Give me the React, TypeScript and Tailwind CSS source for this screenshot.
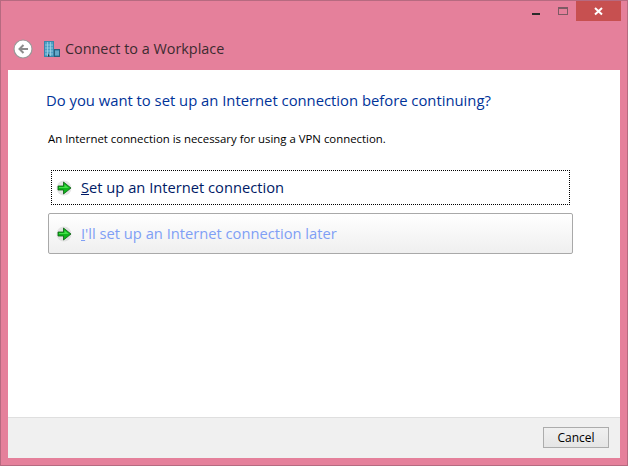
import React from 'react';

const font = "font-['Open_Sans','Noto_Sans',sans-serif]";

function ArrowIcon() {
    return (
        <svg width="18" height="18" viewBox="0 0 18 18" className="shrink-0 -ml-[1px]">
            <circle cx="8" cy="9" r="7.5" fill="#cfcfcf" opacity="0.55" />
            <path d="M2 7h5.5V3L15 9l-7.5 6v-4H2z" fill="#0fb51d" stroke="#0a5f10" strokeWidth="0.8" />
            <path d="M3 8h5.5V5.5L13 9H3z" fill="#45e04a" />
        </svg>
    );
}

function BackIcon() {
    return (
        <svg width="20" height="20" viewBox="0 0 20 20">
            <circle cx="10" cy="10" r="9" fill="#fff" stroke="#9a9a9a" strokeWidth="1.2" />
            <path d="M15 10H7M10.5 6 6.5 10l4 4" fill="none" stroke="#8c8c8c" strokeWidth="2" />
        </svg>
    );
}

function WorkplaceIcon() {
    return (
        <svg width="16" height="16" viewBox="0 0 16 16">
            <rect x="0.5" y="0.5" width="9" height="15" fill="#4f9fc4" stroke="#3a86ab" />
            <path d="M3.5 1v14M6.5 1v14M1 4h8M1 7h8M1 10h8M1 13h8" stroke="#a6d6ea" strokeWidth="0.7" />
            <rect x="10.5" y="8.5" width="5" height="7" fill="#3f8fb5" stroke="#2a5f7c" />
            <path d="M11 11h4M11 13h4" stroke="#a6d6ea" strokeWidth="0.7" />
            <path d="M4 15.5V12l1.5 3.5z" fill="#26323c" />
        </svg>
    );
}

export default function App() {
    return (
        <div className={`${font} w-[628px] h-[466px] bg-[#e5809b] border border-[#b66a80] flex flex-col overflow-hidden`}>
            <div className="h-[20px] flex justify-end shrink-0 pr-[6px]">
                <div className="flex items-start">
                    <div className="w-[8px] h-[2px] bg-[#2b2b2b] mt-[12px] mr-[18px]" />
                    <div className="w-[10px] h-[8px] border border-[#7d5a64] border-t-2 mt-[6px] mr-[8px]" />
                    <div className="w-[45px] h-[20px] bg-[#c75050] flex items-center justify-center">
                        <svg width="10" height="10" viewBox="0 0 10 10">
                            <path d="M1 2 8 8.5M8 2 1 8.5" stroke="#fff" strokeWidth="2" />
                        </svg>
                    </div>
                </div>
            </div>
            <div className="h-[49px] flex items-center shrink-0 pl-[12px] pt-[7px]">
                <BackIcon />
                <div className="ml-[11px] mr-[5px] -mt-[1px]"><WorkplaceIcon /></div>
                <span className="text-[14.4px] text-[#3c2b30]">Connect to a Workplace</span>
            </div>
            <div className="flex-1 mx-[7px] mb-[7px] bg-white flex flex-col">
                <div className="flex-1 pl-[39px] pt-[20px]">
                    <h1 className="text-[14.8px] leading-[22px] text-[#003399] -ml-[1px] -mt-[1px]">Do you want to set up an Internet connection before continuing?</h1>
                    <p className="text-[11.4px] leading-[16px] text-black mt-[20px] ml-[1px]">An Internet connection is necessary for using a VPN connection.</p>
                    <div className="mt-[23px] ml-[4px] w-[519px] h-[35px] border border-dotted border-black flex items-center pl-[5px]">
                        <ArrowIcon />
                        <span className="ml-[7px] text-[14.7px] text-[#001a66]"><span className="underline">S</span>et up an Internet connection</span>
                    </div>
                    <div className="mt-[8px] ml-[1px] w-[525px] h-[41px] border border-[#a9a9a9] rounded-[2px] bg-gradient-to-b from-white to-[#efefef] flex items-center pl-[8px]">
                        <ArrowIcon />
                        <span className="ml-[7px] text-[14.7px] text-[#7f9ff5]"><span className="underline">I</span>'ll set up an Internet connection later</span>
                    </div>
                </div>
                <div className="h-[41px] bg-[#f0f0f0] border-t border-[#dfdfdf] flex justify-end items-start pr-[11px] pt-[9px] shrink-0">
                    <button className="w-[66px] h-[21px] border border-[#acacac] bg-gradient-to-b from-[#f0f0f0] to-[#e5e5e5] text-[12px] text-black flex items-center justify-center">Cancel</button>
                </div>
            </div>
        </div>
    );
}
